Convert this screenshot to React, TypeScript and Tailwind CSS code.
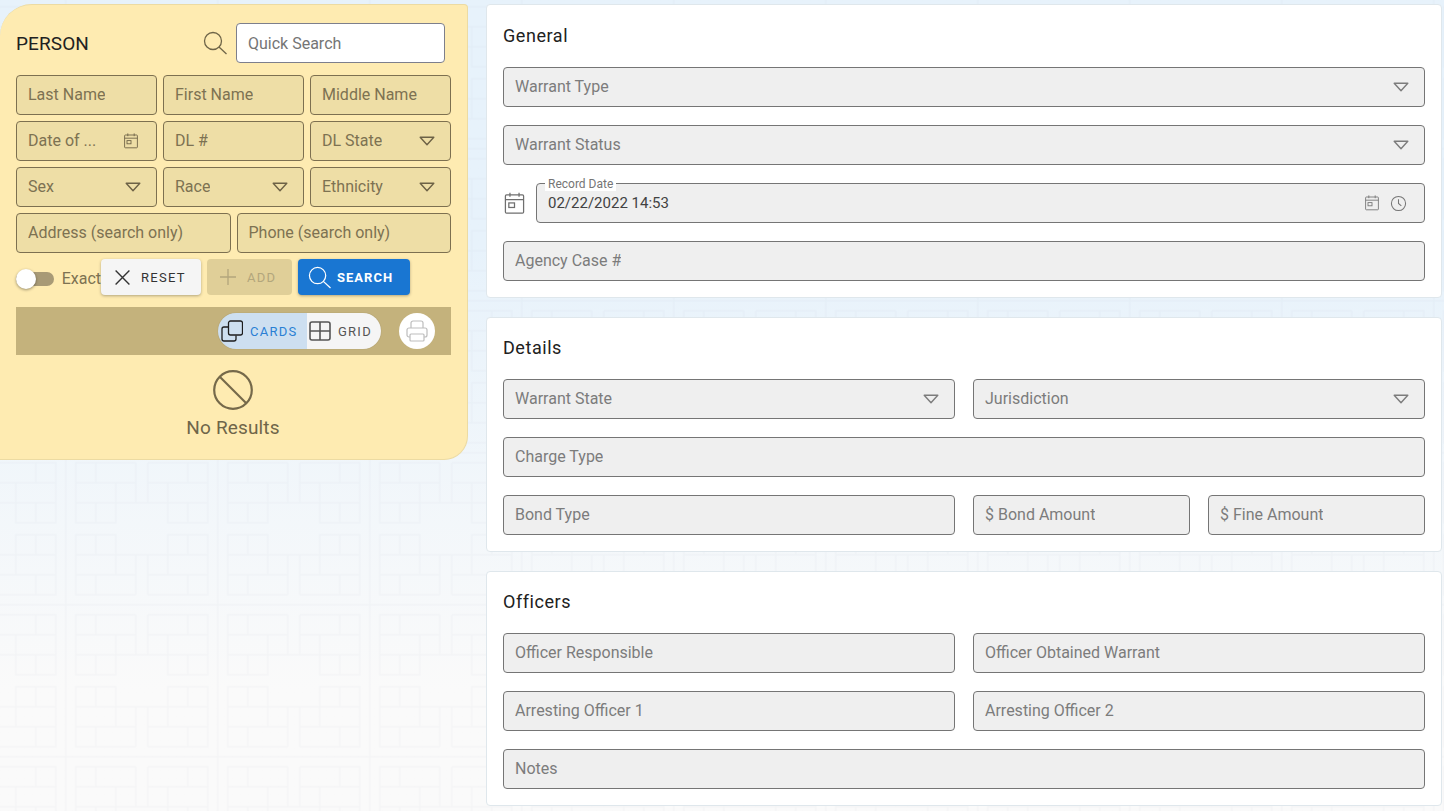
const FONT = "font-['Roboto','Liberation_Sans',sans-serif]"

function Chevron({ className = 'text-[#7c7c7c]' }: { className?: string }) {
  return (
    <svg className={`w-[16px] h-[10px] shrink-0 ${className}`} viewBox="0 0 16 10" fill="none" stroke="currentColor" strokeWidth={1.4}>
      <path d="M1.2 1.2h13.6L8 8.8z" strokeLinejoin="round" />
    </svg>
  )
}

function CalendarIcon({ className = '' }: { className?: string }) {
  return (
    <svg className={className} viewBox="0 0 20 22" fill="none" stroke="currentColor" strokeWidth={1.1}>
      <rect x="2" y="3.5" width="16" height="16" rx="1" />
      <path d="M2 7.5h16M6 1.5v3.5M14 1.5v3.5" />
      <rect x="5" y="10.5" width="5" height="4" />
    </svg>
  )
}

function ClockIcon({ className = '' }: { className?: string }) {
  return (
    <svg className={className} viewBox="0 0 18 18" fill="none" stroke="currentColor" strokeWidth={1.1}>
      <circle cx="9" cy="9" r="7.5" />
      <path d="M9 4.5V9l3 2.5" />
    </svg>
  )
}

function SearchIcon({ className = '' }: { className?: string }) {
  return (
    <svg className={className} viewBox="0 0 24 24" fill="none" stroke="currentColor" strokeWidth={1.3}>
      <circle cx="10" cy="10" r="8.5" />
      <path d="M16 16l7.5 7" />
    </svg>
  )
}

// gray field on the right, tan field on the left
function Field({ label, select, tan, className = '' }: { label: string; select?: boolean; tan?: boolean; className?: string }) {
  return (
    <div
      className={[
        'h-[40px] flex items-center justify-between pl-[11px] pr-[15px] rounded border min-w-0',
        tan ? 'bg-[#eedea6] border-[#7d7050] text-[#7d7252]' : 'bg-[#efefef] border-[#757575] text-[#7c7c7c]',
        className,
      ].join(' ')}
    >
      <span className="text-[16px] whitespace-nowrap overflow-hidden">{label}</span>
      {select && <Chevron className={tan ? 'text-[#6d6246]' : 'text-[#7c7c7c]'} />}
    </div>
  )
}

function Card({ title, first, children }: { title: string; first?: boolean; children: React.ReactNode }) {
  return (
    <section className={`bg-white border border-[#dfe7ec] rounded px-[16px] pb-[16px] ${first ? 'pt-[1px]' : ''}`}>
      <h2 className="h-[61px] flex items-center pb-[2px] text-[18px] font-normal tracking-[0.55px] text-[#212121]">{title}</h2>
      <div className="flex flex-col gap-[18px]">{children}</div>
    </section>
  )
}

// faint maze pattern behind the page, one quadrant mirrored four times
const QUADRANT =
  'M10 46h20v20H10zM30 6h20v20H30zM10 6h20v20H10zM10 26V46M50 26h20v20H50zM30 46h20M70 46V66M30 66h40M70 26h6'

function Backdrop() {
  return (
    <svg className="absolute inset-0 w-full h-full pointer-events-none" aria-hidden="true">
      <defs>
        <pattern id="maze" width="152" height="152" patternUnits="userSpaceOnUse" patternTransform="translate(-10.2 -3.2)">
          <g fill="none" stroke="#8aa0ad" strokeOpacity="0.05" strokeWidth="1.5">
            <path d={QUADRANT} transform="translate(76 76) scale(-1 -1)" />
            <path d={QUADRANT} transform="translate(76 76) scale(1 -1)" />
            <path d={QUADRANT} transform="translate(76 76) scale(-1 1)" />
            <path d={QUADRANT} transform="translate(76 76)" />
            <path d="M76 0V152M0 0H152M0 152H152" />
          </g>
        </pattern>
      </defs>
      <rect width="100%" height="100%" fill="url(#maze)" />
    </svg>
  )
}

function PersonPanel() {
  return (
    <aside className="w-[468px] h-[456px] shrink-0 bg-[#feebb1] border border-l-0 border-[#ecdba3] rounded-tl-[32px] rounded-tr-[4px] rounded-br-[24px] pl-[16px] pr-[16px] pt-[18px]">
      <div className="h-[40px] flex items-center pr-[6px]">
        <span className="text-[19px] tracking-[0.1px] text-[#212121] font-normal leading-none">PERSON</span>
        <SearchIcon className="w-[24px] h-[24px] ml-auto text-[#6f6548]" />
        <div className="w-[209px] h-[40px] ml-[9px] pt-[1px] bg-white border border-[#7d7f8c] rounded flex items-center pl-[11px] text-[16px] text-[#757575]">
          Quick Search
        </div>
      </div>

      <div className="mt-[12px] flex flex-col gap-[6px]">
        <div className="grid grid-cols-3 gap-[6px]">
          <Field tan label="Last Name" />
          <Field tan label="First Name" />
          <Field tan label="Middle Name" />
        </div>
        <div className="grid grid-cols-3 gap-[6px]">
          <div className="h-[40px] flex items-center justify-between pl-[11px] pr-[17px] rounded border bg-[#eedea6] border-[#7d7050] text-[#7d7252]">
            <span className="text-[16px] whitespace-nowrap">Date of ...</span>
            <CalendarIcon className="w-[16px] h-[18px] text-[#6d6246]" />
          </div>
          <Field tan label="DL #" />
          <Field tan select label="DL State" />
        </div>
        <div className="grid grid-cols-3 gap-[6px]">
          <Field tan select label="Sex" />
          <Field tan select label="Race" />
          <Field tan select label="Ethnicity" />
        </div>
        <div className="grid grid-cols-2 gap-[6px]">
          <Field tan label="Address (search only)" />
          <Field tan label="Phone (search only)" />
        </div>
      </div>

      <div className="mt-[6px] h-[36px] flex items-center">
        <div className="w-[85px] shrink-0 flex items-center pt-[4px]">
          <div className="relative w-[38px] h-[14px] rounded-full bg-[#a89a76]">
            <span className="absolute left-0 -top-[3px] w-[20px] h-[20px] rounded-full bg-white shadow-[0_1px_3px_rgba(0,0,0,0.4)]" />
          </div>
          <span className="ml-[8px] text-[16px] text-[#7d7252] whitespace-nowrap">Exact</span>
        </div>
        <button className="relative w-[100px] h-[36px] flex items-center pl-[13px] gap-[10px] bg-[#f5f5f5] rounded-[4px] shadow-[0_1px_3px_rgba(0,0,0,0.3)] text-[#333] text-[13px] font-normal tracking-[1.3px]">
          <svg className="w-[17px] h-[17px]" viewBox="0 0 16 16" fill="none" stroke="currentColor" strokeWidth={1.3}>
            <path d="M1.5 1.5l13 13M14.5 1.5l-13 13" />
          </svg>
          <span className="pt-[2px]">RESET</span>
        </button>
        <button className="ml-[6px] w-[85px] h-[36px] flex items-center pl-[12px] gap-[10px] bg-[#e0cf98] rounded-[4px] text-[#b3a67c] text-[13px] font-normal tracking-[1.3px]">
          <svg className="w-[18px] h-[18px]" viewBox="0 0 18 18" fill="none" stroke="currentColor" strokeWidth={1.3}>
            <path d="M9 1v16M1 9h16" />
          </svg>
          <span className="pt-[2px]">ADD</span>
        </button>
        <button className="ml-[6px] w-[112px] h-[36px] flex items-center pl-[10px] gap-[6px] bg-[#1976d2] rounded-[4px] shadow-[0_1px_3px_rgba(0,0,0,0.3)] text-white text-[13px] font-bold tracking-[1px]">
          <SearchIcon className="w-[23px] h-[23px]" />
          <span className="pt-[2px]">SEARCH</span>
        </button>
      </div>

      <div className="mt-[12px] h-[48px] bg-[#c4b27c] flex items-center justify-end pr-[16px]">
        <div className="flex h-[36px] rounded-full overflow-hidden shadow-[0_0_1px_rgba(0,0,0,0.3)]">
          <div className="w-[89px] flex items-center pl-[3px] gap-[7px] bg-[#cddff0] text-[#2a7fd4] text-[13px] font-normal tracking-[1.25px]">
            <svg className="w-[22px] h-[22px] shrink-0 text-[#1d1d1d]" viewBox="0 0 22 22" fill="none" stroke="currentColor" strokeWidth={1.3}>
              <rect x="7.5" y="1" width="14" height="14" rx="2" />
              <path d="M7 7H3a2 2 0 0 0-2 2v10a2 2 0 0 0 2 2h10a2 2 0 0 0 2-2v-3.5" />
            </svg>
            <span className="pt-[1px]">CARDS</span>
          </div>
          <div className="w-[74px] flex items-center pl-[2px] gap-[7px] bg-[#f5f5f5] text-[#555] text-[13px] font-normal tracking-[1.25px]">
            <svg className="w-[22px] h-[20px] shrink-0 text-[#555]" viewBox="0 0 22 20" fill="none" stroke="currentColor" strokeWidth={1.6}>
              <rect x="1" y="1" width="20" height="18" rx="2" />
              <path d="M11 1v18M1 10h20" />
            </svg>
            <span className="pt-[1px]">GRID</span>
          </div>
        </div>
        <div className="ml-[18px] w-[36px] h-[36px] rounded-full bg-white flex items-center justify-center">
          <svg className="w-[22px] h-[22px] text-[#bdbdbd]" viewBox="0 0 22 22" fill="none" stroke="currentColor" strokeWidth={1.2}>
            <path d="M5 8V3a2 2 0 0 1 2-2h8a2 2 0 0 1 2 2v5" />
            <path d="M4 17H3a2 2 0 0 1-2-2v-5a2 2 0 0 1 2-2h16a2 2 0 0 1 2 2v5a2 2 0 0 1-2 2h-1" />
            <rect x="4" y="14" width="14" height="7" rx="1" />
          </svg>
        </div>
      </div>

      <div className="mt-[15px] flex flex-col items-center pr-[1px]">
        <svg className="w-[40px] h-[40px] text-[#75694a]" viewBox="0 0 40 40" fill="none" stroke="currentColor" strokeWidth={2.2}>
          <circle cx="20" cy="20" r="18.8" />
          <path d="M7 7l26 26" />
        </svg>
        <span className="mt-[6px] text-[19px] font-normal tracking-[0.15px] text-[#6f6549] leading-[24px]">No Results</span>
      </div>
    </aside>
  )
}

export default function App() {
  return (
    <div className={`relative w-[1444px] h-[811px] overflow-hidden bg-gradient-to-b from-[#e7f2fb] from-30% to-[#fafafa] to-[85%] ${FONT}`}>
      <Backdrop />
      <div className="relative flex pt-[4px] pr-[2px] gap-[18px]">
        <PersonPanel />
        <main className="flex-1 flex flex-col gap-[19px] min-w-0">
          <Card first title="General">
            <Field select label="Warrant Type" />
            <Field select label="Warrant Status" />
            <div className="flex items-center gap-[10px]">
              <CalendarIcon className="w-[23px] h-[25px] text-[#6f6f6f] shrink-0" />
              <div className="relative flex-1 h-[40px] flex items-center justify-between pl-[11px] pr-[17px] bg-[#efefef] border border-[#757575] rounded">
                <span className="absolute left-[8px] -top-[6px] px-[3px] bg-white text-[12px] leading-[13px] text-[#757575]">Record Date</span>
                <span className="text-[15px] text-[#424242]">02/22/2022 14:53</span>
                <div className="flex items-center gap-[10px] text-[#757575]">
                  <CalendarIcon className="w-[16px] h-[18px]" />
                  <ClockIcon className="w-[17px] h-[17px]" />
                </div>
              </div>
            </div>
            <Field label="Agency Case #" />
          </Card>

          <Card title="Details">
            <div className="grid grid-cols-2 gap-[18px]">
              <Field select label="Warrant State" />
              <Field select label="Jurisdiction" />
            </div>
            <Field label="Charge Type" />
            <div className="grid grid-cols-[452px_217px_217px] gap-[18px]">
              <Field label="Bond Type" />
              <Field label="$ Bond Amount" />
              <Field label="$ Fine Amount" />
            </div>
          </Card>

          <Card title="Officers">
            <div className="grid grid-cols-2 gap-[18px]">
              <Field label="Officer Responsible" />
              <Field label="Officer Obtained Warrant" />
            </div>
            <div className="grid grid-cols-2 gap-[18px]">
              <Field label="Arresting Officer 1" />
              <Field label="Arresting Officer 2" />
            </div>
            <Field label="Notes" />
          </Card>
        </main>
      </div>
    </div>
  )
}
